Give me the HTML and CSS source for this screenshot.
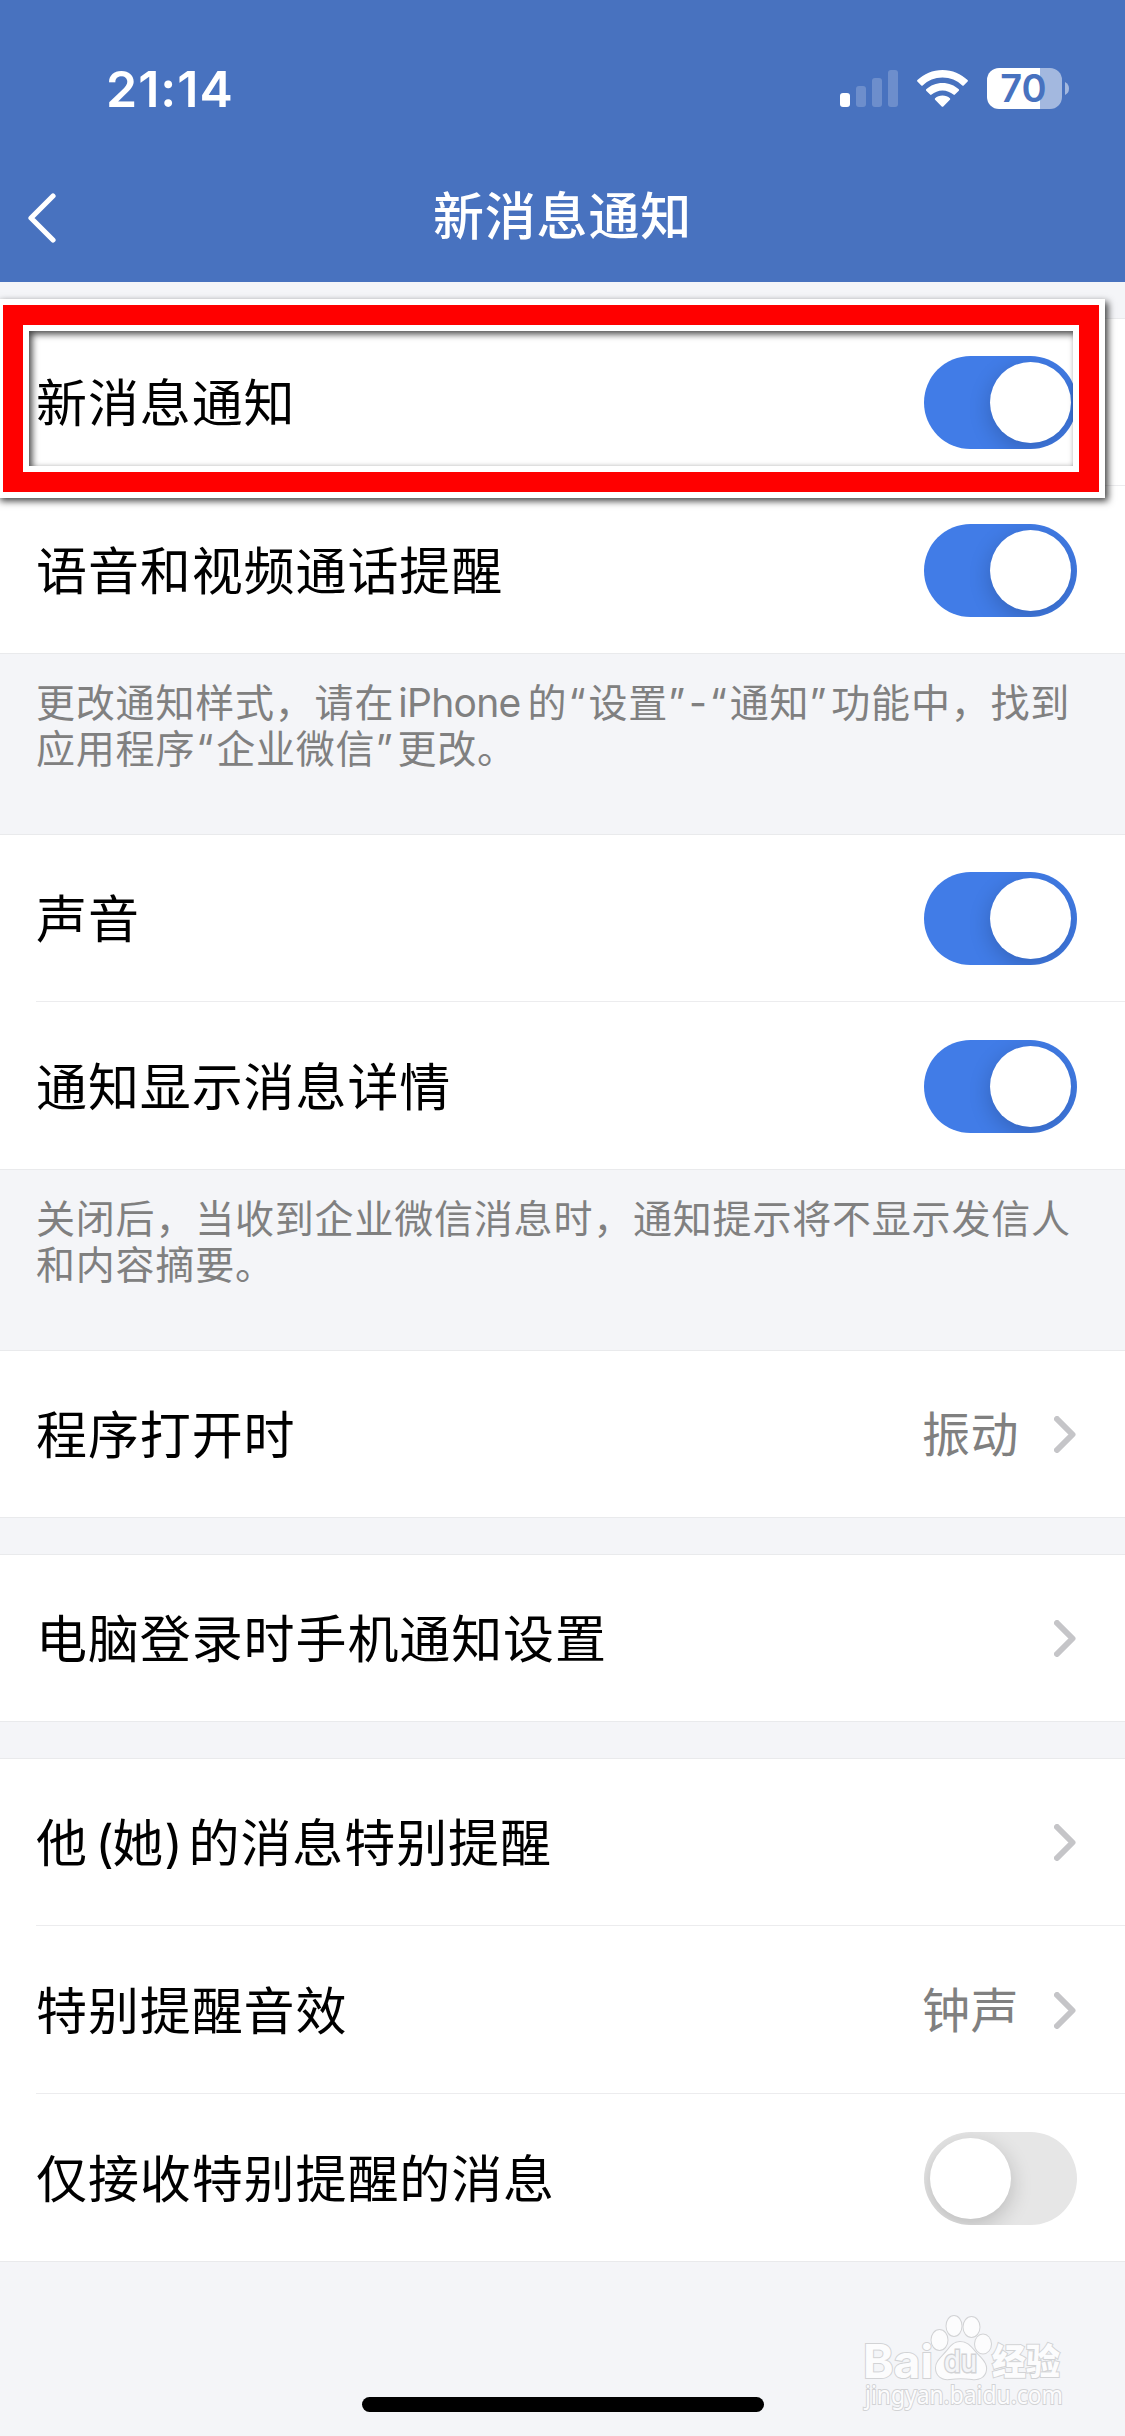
FILE: index.html
```html
<!DOCTYPE html>
<html lang="zh-CN">
<head>
    <meta charset="UTF-8">
    <meta name="viewport" content="width=device-width, initial-scale=1.0">
    <title>新消息通知</title>
    <link rel="stylesheet" href="styles.css">
</head>
<body>
    <div class="page">
        <header class="header">
            <div class="status-bar">
                <span class="time">21:14</span>
                <div class="status-icons">
                    <svg class="signal" width="58" height="37" viewBox="0 0 58 37" fill="#fff">
                        <rect x="0" y="23" width="10" height="14" rx="3"/>
                        <g opacity="0.2">
                            <rect x="16" y="16" width="10" height="21" rx="3"/>
                            <rect x="32" y="8" width="10" height="29" rx="3"/>
                            <rect x="48" y="0" width="10" height="37" rx="3"/>
                        </g>
                    </svg>
                    <svg class="wifi" width="51" height="37" viewBox="0 0 51 37" fill="#fff">
                        <path d="M25.5 0C35.300 0 44.200 3.900 50.600 10.100Q51.300 10.900 50.600 11.600L46.700 15.600Q46 16.100 45.300 15.500C40.100 10.600 33.200 7.600 25.500 7.600S10.900 10.600 5.700 15.500Q5 16.100 4.300 15.600L0.400 11.600Q-0.300 10.900 0.400 10.100C6.800 3.900 15.700 0 25.500 0Z"/>
                        <path d="M25.500 12.900C31.800 12.900 37.500 15.300 41.800 19.200Q42.500 20 41.800 20.700L37.900 24.600Q37.200 25.200 36.400 24.600C33.500 22 29.700 20.400 25.500 20.400S17.500 22 14.600 24.600Q13.800 25.200 13.100 24.600L9.200 20.700Q8.500 20 9.200 19.200C13.500 15.300 19.200 12.900 25.500 12.900Z"/>
                        <path d="M25.500 25.500C28.400 25.500 31 26.500 32.900 28.300Q33.600 29.100 32.900 29.800L26.300 36.500Q25.500 37.200 24.700 36.500L18.100 29.800Q17.400 29.100 18.100 28.300C20 26.500 22.600 25.500 25.500 25.500Z"/>
                    </svg>
                    <div class="battery">
                        <span class="battery-level">70</span>
                    </div>
                    <svg class="battery-cap" width="4" height="13" viewBox="0 0 4 13"><path d="M0 0Q4 2 4 6.500T0 13Z" fill="#a3b8df"/></svg>
                </div>
            </div>
            <div class="nav-bar">
                <svg class="back" width="29" height="50" viewBox="0 0 29 50" fill="none" stroke="#fff" stroke-width="5.200" stroke-linecap="round" stroke-linejoin="round"><path d="M26 3L4 25L26 47"/></svg>
                <h1 class="title">新消息通知</h1>
            </div>
        </header>

        <main class="content">
            <section class="group">
                <div class="row">
                    <span class="label">新消息通知</span>
                    <span class="switch on"></span>
                    <div class="highlight"></div>
                </div>
                <div class="row">
                    <span class="label">语音和视频通话提醒</span>
                    <span class="switch on"></span>
                </div>
            </section>
            <p class="tip">更改通知样式，请在<span class="latin">iPhone</span>的<span class="mark-l">“</span>设置<span class="mark-r">”</span><span class="dash">-</span><span class="mark-l">“</span>通知<span class="mark-r">”</span>功能中，找到<br>应用程序<span class="mark-l">“</span>企业微信<span class="mark-r">”</span>更改。</p>

            <section class="group">
                <div class="row">
                    <span class="label">声音</span>
                    <span class="switch on"></span>
                </div>
                <div class="row">
                    <span class="label">通知显示消息详情</span>
                    <span class="switch on"></span>
                </div>
            </section>
            <p class="tip">关闭后，当收到企业微信消息时，通知提示将不显示发信人<br>和内容摘要。</p>

            <section class="group">
                <div class="row">
                    <span class="label">程序打开时</span>
                    <span class="value">振动</span>
                    <svg class="arrow" width="22" height="37" viewBox="0 0 22 37"><path d="M3 3L18.500 18.500L3 34"/></svg>
                </div>
            </section>

            <section class="group spaced">
                <div class="row">
                    <span class="label">电脑登录时手机通知设置</span>
                    <svg class="arrow" width="22" height="37" viewBox="0 0 22 37"><path d="M3 3L18.500 18.500L3 34"/></svg>
                </div>
            </section>

            <section class="group spaced">
                <div class="row">
                    <span class="label">他 <span class="paren">(</span>她<span class="paren">)</span> 的消息特别提醒</span>
                    <svg class="arrow" width="22" height="37" viewBox="0 0 22 37"><path d="M3 3L18.500 18.500L3 34"/></svg>
                </div>
                <div class="row">
                    <span class="label">特别提醒音效</span>
                    <span class="value">钟声</span>
                    <svg class="arrow" width="22" height="37" viewBox="0 0 22 37"><path d="M3 3L18.500 18.500L3 34"/></svg>
                </div>
                <div class="row">
                    <span class="label">仅接收特别提醒的消息</span>
                    <span class="switch"></span>
                </div>
            </section>
        </main>

        <!-- watermark -->
        <svg class="watermark" width="210" height="110" viewBox="0 0 210 110">
            <g class="mark">
                <text class="bai" x="1" y="72" textLength="70" lengthAdjust="spacingAndGlyphs">Bai</text>
                <ellipse cx="77.500" cy="34" rx="8" ry="10"/>
                <ellipse cx="92" cy="20" rx="7.500" ry="10"/>
                <ellipse cx="109.500" cy="21" rx="8" ry="10"/>
                <ellipse cx="121" cy="38" rx="8" ry="9.500"/>
                <path d="M98 36C107 36 110 43 115 48C120 53 125 58 124 64C123 71 117 74 110 73C102 72 95 72 88 73C79 74 74 69 74 62C74 55 80 51 85 45C89 40 92 36 98 36Z"/>
                <text class="du" x="82" y="66" textLength="33" lengthAdjust="spacingAndGlyphs">du</text>
                <text class="jingyan" x="130" y="69" textLength="68" lengthAdjust="spacingAndGlyphs">经验</text>
                <text class="site" x="3" y="98" textLength="198" lengthAdjust="spacingAndGlyphs">jingyan.baidu.com</text>
            </g>
        </svg>
        <div class="home-indicator"></div>
    </div>
</body>
</html>
```
FILE: styles.css
```css
* {
    box-sizing: border-box;
}
body {
    margin: 0;
    background: #f4f5f8;
    color: #000;
    font-family: Inter, "Noto Sans CJK SC", sans-serif;
}
.page {
    position: relative;
    width: 1125px;
    height: 2436px;
    overflow: hidden;
}

/* header */
.header {
    height: 282px;
    background: #4872bf;
    color: #fff;
}
.status-bar {
    display: flex;
    justify-content: space-between;
    align-items: center;
    height: 150px;
    padding: 27px 56px 0 106px;
}
.time {
    font-size: 50px;
    font-weight: 600;
    letter-spacing: 1px;
}
.status-icons {
    display: flex;
    align-items: center;
}
.wifi {
    margin-left: 19px;
}
.battery {
    display: flex;
    align-items: center;
    justify-content: center;
    width: 75px;
    height: 41px;
    margin-left: 19px;
    padding-right: 2px;
    border-radius: 12px;
    background: linear-gradient(to right, #fff 53px, #a3b8df 53px);
}
.battery-level {
    color: #4872bf;
    font-size: 38px;
    font-weight: 600;
    line-height: 41px;
}
.battery-cap {
    margin-left: 3px;
}
.nav-bar {
    display: grid;
    grid-template-columns: 100px 1fr 100px;
    align-items: center;
    height: 132px;
}
.back {
    margin: 4px 0 0 27px;
}
.title {
    margin: 2px 0 0;
    font-size: 51px;
    font-weight: 500;
    line-height: 74px;
    letter-spacing: 0.8px;
    text-align: center;
}

/* settings list */
.content {
    padding-top: 36px;
}
.group {
    background: #fff;
    box-shadow: inset 0 1px #e9eaec, inset 0 -1px #e9eaec;
}
.group.spaced {
    margin-top: 36px;
}
.row {
    position: relative;
    display: flex;
    align-items: center;
    height: 168px;
    margin-left: 36px;
    padding: 2px 48px 0 0;
    border-bottom: 1px solid #ececee;
}
.row:last-child {
    border-bottom-color: transparent;
}
.label {
    flex: 1;
    padding-top: 2px;
    font-size: 51px;
    line-height: 74px;
    letter-spacing: 0.9px;
    word-spacing: -8px;
}
.paren {
    letter-spacing: -1.5px;
}
.value {
    color: #808080;
    font-size: 48px;
    line-height: 70px;
    letter-spacing: 0.5px;
}
.arrow {
    margin: 0 1px 0 35px;
    fill: none;
    stroke: #c5c5c8;
    stroke-width: 6;
    stroke-linecap: round;
    stroke-linejoin: round;
}
.switch {
    display: flex;
    width: 153px;
    height: 93px;
    padding: 6px;
    border-radius: 47px;
    background: #e6e6e6;
    overflow: hidden;
}
.switch::before {
    content: "";
    width: 81px;
    height: 81px;
    border-radius: 50%;
    background: #fff;
    box-shadow: 0 6px 22px rgba(0, 0, 0, 0.2);
}
.switch.on {
    justify-content: flex-end;
    background: #417ce7;
}
.tip {
    height: 180px;
    margin: 0;
    padding: 26px 36px 0;
    color: #808080;
    font-size: 39px;
    line-height: 46px;
    letter-spacing: 0.8px;
    white-space: nowrap;
}
.latin {
    margin: 0 7px 0 4px;
    letter-spacing: -0.7px;
}
.mark-l {
    margin: 0 2px 0 1px;
}
.mark-r {
    margin-right: 4px;
}
.dash {
    margin: 0 1px 0 -1px;
}

/* red frame around the first row */
.highlight {
    position: absolute;
    z-index: 1;
    top: -19px;
    left: -39px;
    width: 1108px;
    height: 199px;
    border: 32px solid #fff;
    box-shadow: 3px 3px 7px rgba(0, 0, 0, 0.75), inset 3px 3px 7px rgba(0, 0, 0, 0.75);
}
.highlight::before {
    content: "";
    position: absolute;
    inset: -26px;
    border: 20px solid #f00;
}

.watermark {
    position: absolute;
    left: 862px;
    top: 2306px;
    overflow: visible;
}
.mark {
    fill: #fcfcfd;
    stroke: #d2d3d5;
    stroke-width: 2px;
    paint-order: stroke;
}
.bai {
    font: 700 46px Inter, sans-serif;
}
.du {
    font: 500 30px Inter, sans-serif;
    fill: #f4f5f8;
    stroke-width: 3px;
}
.jingyan {
    font: 900 36px "Noto Sans CJK SC", sans-serif;
}
.site {
    font: 400 25px "Noto Sans", sans-serif;
}
.home-indicator {
    position: absolute;
    left: 362px;
    bottom: 24px;
    width: 402px;
    height: 15px;
    border-radius: 8px;
    background: #000;
}
```
